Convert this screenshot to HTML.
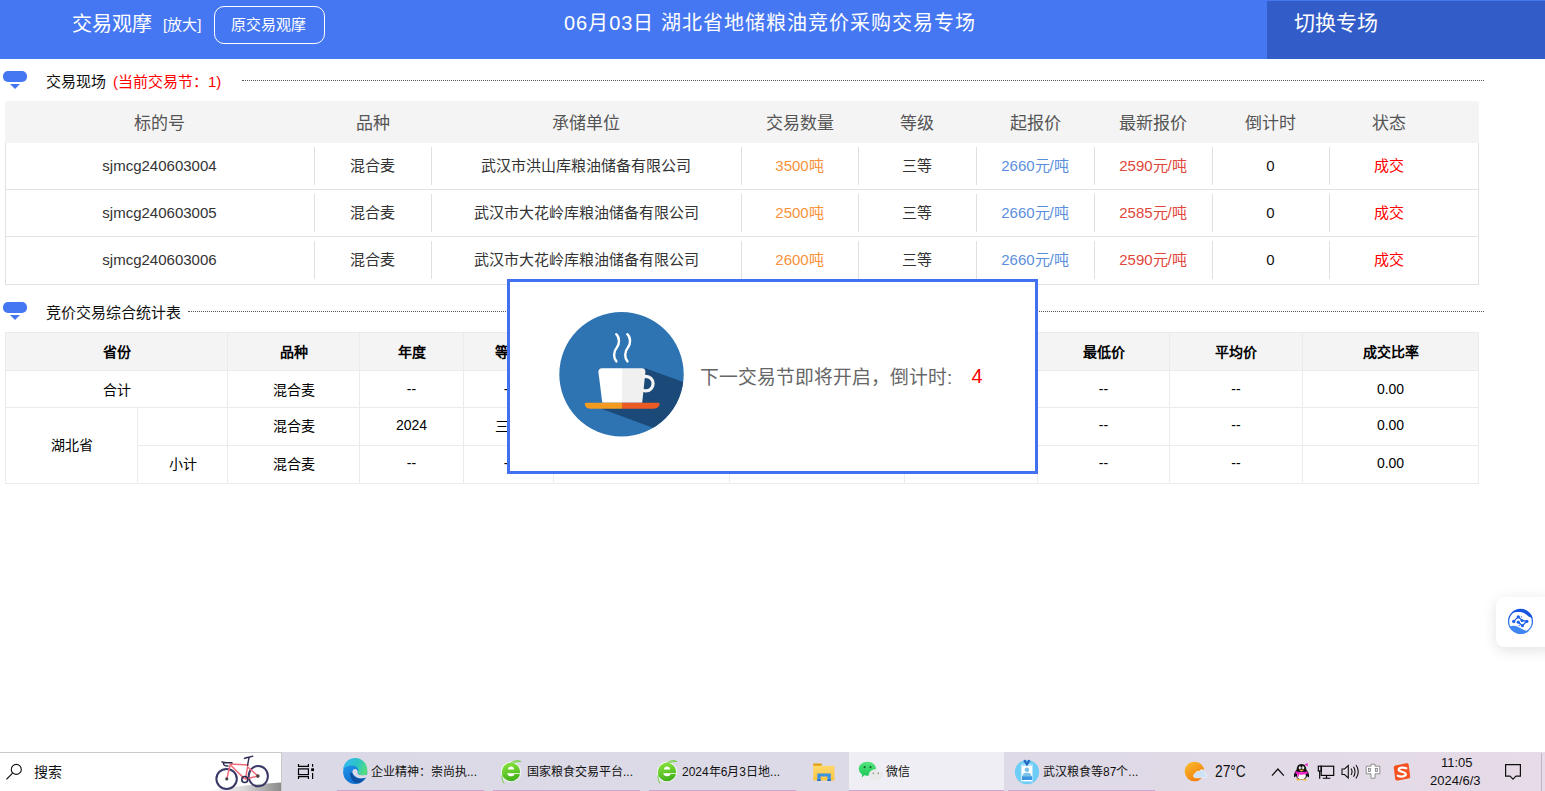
<!DOCTYPE html>
<html lang="zh-CN"><head><meta charset="utf-8">
<style>
*{margin:0;padding:0;box-sizing:border-box}
html,body{width:1545px;height:791px;overflow:hidden;background:#fff;font-family:"Liberation Sans",sans-serif;position:relative}
.a{position:absolute;white-space:nowrap}
#hdr{left:0;top:0;width:1545px;height:59px;background:#4677f2}
#sw{left:1267px;top:1px;width:278px;height:58px;background:#325cc8}
.w{color:#fff}
.icon{position:absolute;left:3px;width:24px;height:18px}
.icon:before{content:"";position:absolute;left:0;top:0;width:24px;height:11px;border-radius:5px;background:#4677f2}
.icon:after{content:"";position:absolute;left:6.5px;top:13px;border-left:5.7px solid transparent;border-right:5.7px solid transparent;border-top:5px solid #4677f2}
.dots{position:absolute;height:0;border-top:1px dotted #555}
.t1{position:absolute;left:5px;top:101px;width:1474px}
.t1h{position:absolute;left:0;top:0;width:1474px;height:42px;background:#f4f4f4;border-radius:3px 3px 0 0}
.t1b{position:absolute;left:0;top:42px;width:1474px;height:142px;border:1px solid #e2e2e2;border-top:none}
.rowline{position:absolute;left:0;width:1472px;height:1px;background:#e2e2e2}
.sep{position:absolute;width:1px;height:38px;background:#e0e0e0}
.c{position:absolute;text-align:center;white-space:nowrap}
.hc{font-size:17px;color:#555}
.bc{font-size:15px;color:#000}
.t2{position:absolute;left:5px;top:332px;width:1474px;height:152px}
.t2 table{border-collapse:collapse;table-layout:fixed;width:1474px;position:absolute;left:0;top:0}
.t2 td,.t2 th{border:1px solid #ebebeb;text-align:center;font-size:14px;color:#000;padding:0}
.t2 th{background:#f4f4f4;font-weight:bold;color:#000;height:38px;padding-bottom:2px}
.t2 td{height:37px}
.t2 tr.r2 td{padding-bottom:3px}
#modal{left:507px;top:279px;width:531px;height:195px;border:3px solid #4170f0;background:#fff}
</style></head><body>
<div class="a" id="hdr"></div>
<div class="a" id="sw"></div>
<div class="a w" style="left:72px;top:10px;font-size:20px;line-height:28px">交易观摩</div>
<div class="a w" style="left:163px;top:15px;font-size:15px;line-height:20px">[放大]</div>
<div class="a" style="left:214px;top:6px;width:111px;height:38px;border:1px solid #fff;border-radius:10px"></div>
<div class="a w" style="left:231px;top:14px;font-size:15px;line-height:22px">原交易观摩</div>
<div class="a w" style="left:564px;top:9px;font-size:20px;line-height:28px;letter-spacing:1px">06月03日 湖北省地储粮油竞价采购交易专场</div>
<div class="a w" style="left:1294px;top:9px;font-size:21px;line-height:28px">切换专场</div>

<!-- section 1 -->
<div class="icon" style="top:71px"></div>
<div class="a" style="left:46px;top:71px;font-size:15px;line-height:21px;color:#111">交易现场</div>
<div class="a" style="left:113px;top:71px;font-size:15px;line-height:21px;color:#f00">(当前交易节：1)</div>
<div class="dots" style="left:242px;top:80px;width:1242px"></div>

<div class="t1">
 <div class="t1h"></div>
 <div class="t1b"></div>
</div>
<div id="t1c">
<div class="c hc" style="left:5px;top:112px;width:309px;line-height:24px">标的号</div>
<div class="c hc" style="left:314px;top:112px;width:117px;line-height:24px">品种</div>
<div class="c hc" style="left:431px;top:112px;width:310px;line-height:24px">承储单位</div>
<div class="c hc" style="left:741px;top:112px;width:117px;line-height:24px">交易数量</div>
<div class="c hc" style="left:858px;top:112px;width:118px;line-height:24px">等级</div>
<div class="c hc" style="left:976px;top:112px;width:118px;line-height:24px">起报价</div>
<div class="c hc" style="left:1094px;top:112px;width:118px;line-height:24px">最新报价</div>
<div class="c hc" style="left:1212px;top:112px;width:117px;line-height:24px">倒计时</div>
<div class="c hc" style="left:1329px;top:112px;width:120px;line-height:24px">状态</div>
<div class="c bc" style="left:5px;top:155px;width:309px;line-height:22px;color:#333">sjmcg240603004</div>
<div class="c bc" style="left:314px;top:155px;width:117px;line-height:22px;color:#333">混合麦</div>
<div class="sep" style="left:314px;top:147px"></div>
<div class="c bc" style="left:431px;top:155px;width:310px;line-height:22px;color:#333">武汉市洪山库粮油储备有限公司</div>
<div class="sep" style="left:431px;top:147px"></div>
<div class="c bc" style="left:741px;top:155px;width:117px;line-height:22px;color:#f7923b">3500吨</div>
<div class="sep" style="left:741px;top:147px"></div>
<div class="c bc" style="left:858px;top:155px;width:118px;line-height:22px;color:#333">三等</div>
<div class="sep" style="left:858px;top:147px"></div>
<div class="c bc" style="left:976px;top:155px;width:118px;line-height:22px;color:#5b8fde">2660元/吨</div>
<div class="sep" style="left:976px;top:147px"></div>
<div class="c bc" style="left:1094px;top:155px;width:118px;line-height:22px;color:#e0463c">2590元/吨</div>
<div class="sep" style="left:1094px;top:147px"></div>
<div class="c bc" style="left:1212px;top:155px;width:117px;line-height:22px;color:#111">0</div>
<div class="sep" style="left:1212px;top:147px"></div>
<div class="c bc" style="left:1329px;top:155px;width:120px;line-height:22px;color:#f00">成交</div>
<div class="sep" style="left:1329px;top:147px"></div>
<div class="rowline" style="left:6px;top:189px"></div>
<div class="c bc" style="left:5px;top:202px;width:309px;line-height:22px;color:#333">sjmcg240603005</div>
<div class="c bc" style="left:314px;top:202px;width:117px;line-height:22px;color:#333">混合麦</div>
<div class="sep" style="left:314px;top:194px"></div>
<div class="c bc" style="left:431px;top:202px;width:310px;line-height:22px;color:#333">武汉市大花岭库粮油储备有限公司</div>
<div class="sep" style="left:431px;top:194px"></div>
<div class="c bc" style="left:741px;top:202px;width:117px;line-height:22px;color:#f7923b">2500吨</div>
<div class="sep" style="left:741px;top:194px"></div>
<div class="c bc" style="left:858px;top:202px;width:118px;line-height:22px;color:#333">三等</div>
<div class="sep" style="left:858px;top:194px"></div>
<div class="c bc" style="left:976px;top:202px;width:118px;line-height:22px;color:#5b8fde">2660元/吨</div>
<div class="sep" style="left:976px;top:194px"></div>
<div class="c bc" style="left:1094px;top:202px;width:118px;line-height:22px;color:#e0463c">2585元/吨</div>
<div class="sep" style="left:1094px;top:194px"></div>
<div class="c bc" style="left:1212px;top:202px;width:117px;line-height:22px;color:#111">0</div>
<div class="sep" style="left:1212px;top:194px"></div>
<div class="c bc" style="left:1329px;top:202px;width:120px;line-height:22px;color:#f00">成交</div>
<div class="sep" style="left:1329px;top:194px"></div>
<div class="rowline" style="left:6px;top:236px"></div>
<div class="c bc" style="left:5px;top:249px;width:309px;line-height:22px;color:#333">sjmcg240603006</div>
<div class="c bc" style="left:314px;top:249px;width:117px;line-height:22px;color:#333">混合麦</div>
<div class="sep" style="left:314px;top:241px"></div>
<div class="c bc" style="left:431px;top:249px;width:310px;line-height:22px;color:#333">武汉市大花岭库粮油储备有限公司</div>
<div class="sep" style="left:431px;top:241px"></div>
<div class="c bc" style="left:741px;top:249px;width:117px;line-height:22px;color:#f7923b">2600吨</div>
<div class="sep" style="left:741px;top:241px"></div>
<div class="c bc" style="left:858px;top:249px;width:118px;line-height:22px;color:#333">三等</div>
<div class="sep" style="left:858px;top:241px"></div>
<div class="c bc" style="left:976px;top:249px;width:118px;line-height:22px;color:#5b8fde">2660元/吨</div>
<div class="sep" style="left:976px;top:241px"></div>
<div class="c bc" style="left:1094px;top:249px;width:118px;line-height:22px;color:#e0463c">2590元/吨</div>
<div class="sep" style="left:1094px;top:241px"></div>
<div class="c bc" style="left:1212px;top:249px;width:117px;line-height:22px;color:#111">0</div>
<div class="sep" style="left:1212px;top:241px"></div>
<div class="c bc" style="left:1329px;top:249px;width:120px;line-height:22px;color:#f00">成交</div>
<div class="sep" style="left:1329px;top:241px"></div>
</div>

<!-- section 2 -->
<div class="icon" style="top:302px"></div>
<div class="a" style="left:46px;top:302px;font-size:15px;line-height:21px;color:#111">竞价交易综合统计表</div>
<div class="dots" style="left:188px;top:311px;width:1296px"></div>

<div class="t2">
<table>
<colgroup><col style="width:132px"><col style="width:90px"><col style="width:132px"><col style="width:104px"><col style="width:90px"><col style="width:176px"><col style="width:175px"><col style="width:133px"><col style="width:132px"><col style="width:133px"><col style="width:176px"></colgroup>
<tr><th colspan="2">省份</th><th>品种</th><th>年度</th><th>等级</th><th>挂牌数量</th><th>成交数量</th><th>最高价</th><th>最低价</th><th>平均价</th><th>成交比率</th></tr>
<tr><td colspan="2">合计</td><td>混合麦</td><td>--</td><td>--</td><td>3</td><td>3</td><td>--</td><td>--</td><td>--</td><td>0.00</td></tr>
<tr class="r2" style="height:38px"><td rowspan="2">湖北省</td><td></td><td>混合麦</td><td>2024</td><td>三等</td><td>3</td><td>3</td><td>--</td><td>--</td><td>--</td><td>0.00</td></tr>
<tr class="r2" style="height:38px"><td>小计</td><td>混合麦</td><td>--</td><td>--</td><td>3</td><td>3</td><td>--</td><td>--</td><td>--</td><td>0.00</td></tr>
</table>
</div>

<div class="a" id="modal"></div>
<svg class="a" style="left:555px;top:308px" width="135" height="135" viewBox="555 308 135 135">
<defs><clipPath id="cc"><circle cx="621.5" cy="374.3" r="62.2"/></clipPath>
<linearGradient id="cupg" x1="598.4" x2="645.4" gradientUnits="userSpaceOnUse"><stop offset="0.502" stop-color="#fff"/><stop offset="0.502" stop-color="#f0f0f0"/></linearGradient>
<linearGradient id="sauc" x1="585" x2="659.3" gradientUnits="userSpaceOnUse"><stop offset="0.498" stop-color="#f39a21"/><stop offset="0.498" stop-color="#ed5b25"/></linearGradient></defs>
<circle cx="621.5" cy="374.3" r="62.2" fill="#2e74b2"/>
<polygon clip-path="url(#cc)" points="645.4,368.3 720,395.2 720,452.5 601.4,408.8 602,402" fill="#1b4a78"/>
<circle cx="645.8" cy="383.6" r="7.3" fill="none" stroke="#f4f4f4" stroke-width="3.2"/>
<path d="M598.4,372 Q598.4,368.3 602,368.3 L641.8,368.3 Q645.4,368.3 645.4,372 L642.2,402.8 L602.3,402.8 Z" fill="url(#cupg)"/>
<path d="M586.5,402.8 L658,402.8 C660,402.8 660,404.5 659,405.8 C658,407.6 656.5,408.7 653,408.7 L591,408.7 C587.5,408.7 586,407.6 585.2,405.8 C584.3,404.5 584.5,402.8 586.5,402.8 Z" fill="url(#sauc)"/>
<path d="M616.2,334.2 C619.8,337.5 619.8,344 616.7,347.8 C613.3,351.5 613.3,358 616.4,361.4" fill="none" stroke="#fff" stroke-width="2.4" stroke-linecap="round"/>
<path d="M627.3,334.2 C630.9,337.5 630.9,344 627.8,347.8 C624.4,351.5 624.4,358 627.5,361.4" fill="none" stroke="#fff" stroke-width="2.4" stroke-linecap="round"/>
</svg>
<div class="a" style="left:700px;top:363.5px;font-size:18.8px;line-height:28px;color:#666">下一交易节即将开启，倒计时:</div>
<div class="a" style="left:971.5px;top:362px;font-size:20px;line-height:28px;color:#f00">4</div>

<!-- taskbar -->
<div class="a" style="left:0;top:752px;width:1545px;height:39px;background:linear-gradient(to right,#dad9e5 0%,#dcdae6 55%,#e0dae7 75%,#e6dbe7 100%)"></div>
<div class="a" style="left:0;top:752px;width:282px;height:39px;background:#fff;border-top:1px solid #c9c9c9;border-right:1px solid #c9c9c9"></div>
<svg class="a" style="left:0;top:752px" width="40" height="39" viewBox="0 752 40 39"><circle cx="16.3" cy="769.4" r="5" fill="none" stroke="#111" stroke-width="1.1"/><line x1="12.6" y1="773.2" x2="6.4" y2="779.4" stroke="#111" stroke-width="1.2"/></svg>
<div class="a" style="left:34px;top:762px;font-size:14px;line-height:20px;color:#111">搜索</div>
<!-- bike -->
<svg class="a" style="left:200px;top:753px" width="81" height="38" viewBox="200 753 81 38">
<defs><linearGradient id="gnd" x1="207" y1="0" x2="281" y2="0" gradientUnits="userSpaceOnUse"><stop offset="0" stop-color="#fff"/><stop offset="0.5" stop-color="#d8d8d8"/><stop offset="1" stop-color="#8a8a8a"/></linearGradient></defs>
<path d="M207,791 C230,787 255,784 281,782.4 L281,791 Z" fill="url(#gnd)"/>
<ellipse cx="226.6" cy="778.9" rx="10.2" ry="10" fill="none" stroke="#3a3868" stroke-width="2"/>
<ellipse cx="258.3" cy="776.1" rx="9.6" ry="10.2" fill="none" stroke="#3a3868" stroke-width="2"/>
<path d="M230.4,764 L226.8,778.9 M231,765.5 L244.6,778.9 M230.4,763.9 L247.8,765 L245.6,778.9 L258,776.1 L248.3,767.5" fill="none" stroke="#f06a7a" stroke-width="1.5" stroke-linejoin="round"/>
<path d="M247.6,765 L249,757.7 M244.4,758.4 C247,757 250,757.5 252.8,756.2 M222,761.8 C224,763 227,762.5 232,762.8 M223.5,762.5 C223,765 225,766.3 228,766" fill="none" stroke="#2c2a50" stroke-width="1.4" stroke-linecap="round"/>
<circle cx="244.8" cy="779.5" r="3" fill="none" stroke="#2c2a50" stroke-width="1.6"/>
<circle cx="226.8" cy="778.9" r="1.6" fill="#444"/><circle cx="257.9" cy="776.1" r="1.8" fill="#444"/>
</svg>
<!-- task view -->
<svg class="a" style="left:290px;top:752px" width="30" height="39" viewBox="290 752 30 39" fill="none" stroke="#000" stroke-width="1.2">
<path d="M298.5,764 L298.5,766.3 L308.4,766.3 L308.4,764 M298.5,779 L298.5,776.6 L308.4,776.6 L308.4,779 M312.6,764 L312.6,766.8 M312.6,773 L312.6,779"/>
<rect x="298.5" y="768.9" width="9.9" height="5.7"/><rect x="311.2" y="768.3" width="2.8" height="2.8" fill="#000" stroke="none"/>
</svg>
<!-- underlines -->
<div class="a" style="left:337px;top:790px;width:147px;height:1px;background:#cfa6cf"></div>
<div class="a" style="left:493px;top:790px;width:147px;height:1px;background:#cfa6cf"></div>
<div class="a" style="left:649px;top:790px;width:147px;height:1px;background:#cfa6cf"></div>
<div class="a" style="left:849px;top:752px;width:155px;height:39px;background:#efeef4"></div>
<div class="a" style="left:849px;top:790px;width:155px;height:1px;background:#cfa6cf"></div>
<div class="a" style="left:1008px;top:790px;width:147px;height:1px;background:#cfa6cf"></div>
<!-- edge -->
<svg class="a" style="left:340px;top:757px" width="30" height="30" viewBox="340 757 30 30">
<defs><linearGradient id="eg1" x1="343" y1="762" x2="367" y2="774" gradientUnits="userSpaceOnUse"><stop offset="0" stop-color="#38b8f2"/><stop offset="0.5" stop-color="#2cc4c6"/><stop offset="1" stop-color="#5de36e"/></linearGradient>
<linearGradient id="eg2" x1="345" y1="766" x2="352" y2="784" gradientUnits="userSpaceOnUse"><stop offset="0" stop-color="#1d92e6"/><stop offset="1" stop-color="#0f6fd0"/></linearGradient></defs>
<circle cx="355.2" cy="771.9" r="12.1" fill="url(#eg2)"/>
<path d="M343.1,769.2 C346.5,765.2 352.5,764.5 356,766.6 C358.5,768 358.6,771 357.6,773 C359,775 362.5,775.8 366.2,775 A12.1,12.1 0 1 0 343.1,769.2 Z" fill="url(#eg1)"/>
<ellipse cx="355" cy="771.9" rx="2.5" ry="2.8" fill="#dbdae6"/>
<path d="M352.5,772.5 C353.5,776 357,777.8 360,778.2 C362.5,778.4 365,778 368,777 L368,774.3 C365,775.5 361,775.6 358.6,774.6 C357.6,774.1 357.4,772.5 357.4,771 Z" fill="#dbdae6"/>
<path d="M350.2,772.2 C350,776 351,780 355.2,782.8 C358.5,783.6 362.5,781.6 365.2,778 C362.5,779.2 360.5,779.2 358.6,778.8 C355.5,778 353.2,776 352.5,773.2 Z" fill="#0e4fa2"/>
</svg>
<div class="a" style="left:371px;top:762px;font-size:12px;line-height:20px;color:#111">企业精神：崇尚执...</div>
<!-- ie1 -->
<svg class="a" style="left:496px;top:757px" width="30" height="30" viewBox="496 757 30 30">
<defs><linearGradient id="ieg" x1="0" y1="0" x2="0.3" y2="1"><stop offset="0" stop-color="#8ee83a"/><stop offset="1" stop-color="#46b21e"/></linearGradient></defs>
<circle cx="511" cy="772" r="10.2" fill="#f4f4f6"/><circle cx="511" cy="772" r="9.2" fill="url(#ieg)"/>
<path d="M508,769.6 C508,767.5 509.3,766.4 511,766.4 C512.7,766.4 514.1,767.5 514.1,769.6 Z" fill="#fff"/>
<path d="M507.2,773.3 L520.2,773.3 L520.2,774 L514.6,774 C514.2,775.6 512.8,776.2 511,776.2 C509,776.2 507.4,775.3 507.2,773.3 Z" fill="#fff"/>
<path d="M504.2,783.6 C501.5,780 501.8,776 503,773.5 C504.5,769.5 507.5,765 511.5,762.5 C514.5,760.5 518,760 520.8,761.5 C518,761.2 515,762 512.5,763.5" fill="none" stroke="#6fd33a" stroke-width="1"/>
</svg>
<div class="a" style="left:527px;top:762px;font-size:12px;line-height:20px;color:#111">国家粮食交易平台...</div>
<!-- ie2 -->
<svg class="a" style="left:652px;top:757px" width="30" height="30" viewBox="496 757 30 30">
<defs><linearGradient id="ieg2" x1="0" y1="0" x2="0.3" y2="1"><stop offset="0" stop-color="#8ee83a"/><stop offset="1" stop-color="#46b21e"/></linearGradient></defs>
<circle cx="511" cy="772" r="10.2" fill="#f4f4f6"/><circle cx="511" cy="772" r="9.2" fill="url(#ieg2)"/>
<path d="M508,769.6 C508,767.5 509.3,766.4 511,766.4 C512.7,766.4 514.1,767.5 514.1,769.6 Z" fill="#fff"/>
<path d="M507.2,773.3 L520.2,773.3 L520.2,774 L514.6,774 C514.2,775.6 512.8,776.2 511,776.2 C509,776.2 507.4,775.3 507.2,773.3 Z" fill="#fff"/>
<path d="M504.2,783.6 C501.5,780 501.8,776 503,773.5 C504.5,769.5 507.5,765 511.5,762.5 C514.5,760.5 518,760 520.8,761.5 C518,761.2 515,762 512.5,763.5" fill="none" stroke="#6fd33a" stroke-width="1"/>
</svg>
<div class="a" style="left:682px;top:762px;font-size:12px;line-height:20px;color:#111">2024年6月3日地...</div>
<!-- explorer -->
<svg class="a" style="left:810px;top:760px" width="28" height="24" viewBox="810 760 28 24">
<defs><linearGradient id="exg" x1="0" y1="0" x2="0" y2="1"><stop offset="0" stop-color="#ffd86e"/><stop offset="1" stop-color="#fbc440"/></linearGradient></defs>
<path d="M813.2,763.5 L821,763.5 L822.2,764.6 L821,766 L813.2,766 Z" fill="#e3a20c"/>
<rect x="813.2" y="765.7" width="21.3" height="14.8" rx="0.6" fill="url(#exg)"/>
<path d="M817.3,781 L817.3,773.5 L830.8,773.5 L830.8,781 L827.5,781 L827.5,776.5 L820.6,776.5 L820.6,781 Z" fill="#3d93df"/>
<rect x="817.3" y="779.5" width="3.3" height="1.5" fill="#1f6fc0"/><rect x="827.5" y="779.5" width="3.3" height="1.5" fill="#1f6fc0"/>
</svg>
<!-- wechat -->
<svg class="a" style="left:855px;top:759px" width="30" height="25" viewBox="855 759 30 25">
<defs><linearGradient id="wcg" x1="0" y1="0" x2="0" y2="1"><stop offset="0" stop-color="#55e67e"/><stop offset="1" stop-color="#17c653"/></linearGradient></defs>
<path d="M867.4,761.8 C872.5,761.8 876,765 876,768.8 C876,772.6 872.5,775.8 867.4,775.8 C866.2,775.8 865.2,775.6 864.2,775.3 L861.8,777.5 L862.2,774.5 C860,773.1 858.8,771 858.8,768.8 C858.8,765 862.3,761.8 867.4,761.8 Z" fill="url(#wcg)"/>
<circle cx="864.6" cy="767.2" r="1.1" fill="#1b6a33"/><circle cx="870.5" cy="767.2" r="1.1" fill="#1b6a33"/>
<path d="M876,769.6 C880,769.6 883,772 883,775 C883,777 881.7,778.6 880,779.5 L880.5,781.8 L878.3,780.4 C877.6,780.6 876.8,780.7 876,780.7 C872,780.7 869.2,778.2 869.2,775.1 C869.2,772 872,769.6 876,769.6 Z" fill="#e9e9ea" stroke="#efeef4" stroke-width="0.8"/>
<rect x="872.7" y="772.5" width="1.4" height="1.6" fill="#9a9a9a"/><rect x="877.6" y="772.5" width="1.4" height="1.6" fill="#9a9a9a"/>
</svg>
<div class="a" style="left:886px;top:762px;font-size:12px;line-height:20px;color:#111">微信</div>
<!-- wuhan -->
<svg class="a" style="left:1013px;top:758px" width="28" height="28" viewBox="1013 758 28 28">
<circle cx="1027" cy="772.1" r="12.1" fill="#6dcdf6"/>
<rect x="1020.8" y="763.8" width="12.2" height="18.2" fill="#a9e0fa"/>
<rect x="1021.7" y="766" width="10.4" height="15" fill="#fff"/>
<circle cx="1026.9" cy="769.8" r="2.3" fill="#7cc3ea"/>
<path d="M1022.5,776.3 C1022.5,773.5 1024.5,772.8 1026.9,772.8 C1029.3,772.8 1031.3,773.5 1031.3,776.3 Z" fill="#7cc3ea"/>
<rect x="1022" y="776.2" width="10.1" height="3.8" fill="#3a97e0"/>
<path d="M1024.3,760.2 L1026.9,764.3 L1029.5,760.2" fill="none" stroke="#2566c0" stroke-width="2.2"/>
</svg>
<div class="a" style="left:1043px;top:762px;font-size:12px;line-height:20px;color:#111">武汉粮食等87个...</div>
<!-- weather -->
<svg class="a" style="left:1182px;top:759px" width="28" height="25" viewBox="1182 759 28 25">
<defs><linearGradient id="sun" x1="0" y1="0" x2="0.7" y2="1"><stop offset="0" stop-color="#fbc02d"/><stop offset="1" stop-color="#f07a0c"/></linearGradient></defs>
<circle cx="1194.5" cy="771.5" r="9.8" fill="url(#sun)"/>
<path d="M1195.5,777.8 C1193,777.8 1192.8,774.2 1195.2,773.8 C1195.6,771.8 1197.6,770.8 1199.3,771.5 C1200.2,769.5 1203.6,769 1204.8,771.8 C1205.5,773 1205.2,774 1205,774.2 C1207.5,774.6 1207.5,777.8 1205,777.8 Z" fill="#cde2f7" stroke="#f5f8fc" stroke-width="0.7"/>
</svg>
<div class="a" style="left:1215px;top:760px;font-size:15px;line-height:22px;color:#111;transform:scale(0.92,1.08);transform-origin:0 0">27°C</div>
<svg class="a" style="left:1268px;top:764px" width="20" height="14" viewBox="1268 764 20 14"><path d="M1272,775.6 L1277.9,769 L1283.8,775.6" fill="none" stroke="#111" stroke-width="1.3"/></svg>
<!-- qq -->
<svg class="a" style="left:1292px;top:762px" width="20" height="20" viewBox="1292 762 20 20">
<path d="M1301.5,764 C1305,764 1306.3,767 1306.3,769.5 C1308,771 1309.5,774 1309,777 C1308.5,778 1307.5,776.5 1307,776 C1306.5,778.5 1304.5,779.5 1301.5,779.5 C1298.5,779.5 1296.5,778.5 1296,776 C1295.5,776.5 1294.5,778 1294,777 C1293.5,774 1295,771 1296.7,769.5 C1296.7,767 1298,764 1301.5,764 Z" fill="#111"/>
<ellipse cx="1301.5" cy="775.5" rx="4.3" ry="3.8" fill="#fff"/>
<ellipse cx="1300" cy="767.8" rx="1.3" ry="1.5" fill="#fff"/><ellipse cx="1303" cy="767.8" rx="1.3" ry="1.5" fill="#fff"/>
<circle cx="1300.2" cy="768" r="0.5" fill="#111"/><circle cx="1302.8" cy="768" r="0.5" fill="#111"/>
<path d="M1298.5,769.8 L1304.5,769.8 L1301.5,771.3 Z" fill="#f6b829"/>
<path d="M1295.5,771 C1299,772.6 1304,772.6 1307.5,771 L1307.8,773.5 C1304,775 1299,775 1295.3,773.5 Z" fill="#f01fc8"/>
<path d="M1297.5,773.5 L1297.2,777 L1298.8,776.5 L1299,774 Z" fill="#f01fc8"/>
<path d="M1304.5,764.5 L1307.5,763 L1307.8,766.5 Z" fill="#f01fc8"/>
<ellipse cx="1298.3" cy="779.7" rx="2.4" ry="0.7" fill="#f6b829"/><ellipse cx="1304.7" cy="779.7" rx="2.4" ry="0.7" fill="#f6b829"/>
</svg>
<!-- network -->
<svg class="a" style="left:1315px;top:763px" width="22" height="18" viewBox="1315 763 22 18" fill="none" stroke="#000" stroke-width="1.15">
<rect x="1321.2" y="766.2" width="12.5" height="9.2"/><path d="M1322.8,778.2 L1330.3,778.2 M1326.5,775.4 L1326.5,778.2 M1319.7,771 L1319.7,778.8"/><rect x="1318.3" y="766.2" width="2.9" height="4.8"/>
</svg>
<!-- volume -->
<svg class="a" style="left:1339px;top:763px" width="22" height="18" viewBox="1339 763 22 18" fill="none" stroke="#111" stroke-width="1.1">
<path d="M1342,769 L1344.5,769 L1348.3,765.5 L1348.3,778 L1344.5,774.5 L1342,774.5 Z"/><path d="M1351,768.5 C1352.3,770.5 1352.3,773 1351,775 M1353.5,766.7 C1355.5,769.5 1355.5,774 1353.5,776.8 M1356,765 C1359,769 1359,774.5 1356,778.4"/>
</svg>
<svg class="a" style="left:1363px;top:762px" width="20" height="18" viewBox="1363 762 20 18">
<path d="M1371,764.2 L1375,764.2 L1375,766.2 L1379.8,766.2 L1379.8,773.8 L1375,773.8 L1375,778.2 L1371,778.2 L1371,773.8 L1366.2,773.8 L1366.2,766.2 L1371,766.2 Z" fill="#fff" stroke="#707070" stroke-width="0.75"/>
<rect x="1368.6" y="768.3" width="1.8" height="3.3" fill="#e0dae6" stroke="#707070" stroke-width="0.7"/><rect x="1375.6" y="768.3" width="1.8" height="3.3" fill="#e0dae6" stroke="#707070" stroke-width="0.7"/>
</svg>
<!-- sogou -->
<svg class="a" style="left:1392px;top:762px" width="20" height="20" viewBox="1392 762 20 20">
<path d="M1396.5,764.6 L1407.5,764 C1408.8,764 1409.5,764.6 1409.6,765.8 L1409.5,777 C1409.5,778.5 1408.8,779.3 1407.5,779.4 L1396.5,779.8 C1395.2,779.8 1394.4,779 1394.3,777.7 L1394.5,766.6 C1394.5,765.4 1395.3,764.7 1396.5,764.6 Z" fill="#f4511e" transform="rotate(-8 1402 772)"/>
<path d="M1406.3,768.3 C1403.5,767 1398.8,767.5 1398.7,769.8 C1398.6,772 1405.8,771.5 1405.8,774.3 C1405.8,776.5 1401,777.2 1397.8,775.8" fill="none" stroke="#fff" stroke-width="2.3" stroke-linecap="round"/>
</svg>
<div class="a" style="left:1441px;top:755px;font-size:13px;line-height:15px;color:#111">11:05</div>
<div class="a" style="left:1430px;top:773px;font-size:13px;line-height:15px;color:#111">2024/6/3</div>
<svg class="a" style="left:1503px;top:762px" width="22" height="20" viewBox="1503 762 22 20" fill="none" stroke="#111" stroke-width="1.2">
<path d="M1505.6,764.6 L1520.4,764.6 L1520.4,776.2 L1516,776.2 L1513,779.2 L1510,776.2 L1505.6,776.2 Z"/>
</svg>
<div class="a" style="left:1541px;top:753px;width:1px;height:38px;background:#b9b6c6"></div>
<!-- floating -->
<div class="a" style="left:1496px;top:597px;width:60px;height:50px;background:#fff;border-radius:8px;box-shadow:0 3px 14px rgba(0,0,0,0.12)"></div>
<svg class="a" style="left:1505px;top:606px" width="32" height="32" viewBox="1505 606 32 32">
<defs><linearGradient id="fg" x1="0" y1="0" x2="0" y2="1"><stop offset="0" stop-color="#1656e0"/><stop offset="1" stop-color="#4b8ff6"/></linearGradient></defs>
<circle cx="1520.5" cy="621.4" r="11.9" fill="none" stroke="url(#fg)" stroke-width="1.3"/>
<path d="M1511.5,613.5 A12.4,12.4 0 0 1 1532.4,617.5 C1530,618 1528,616 1525.5,614 C1522,611.5 1516,611.5 1511.5,613.5 Z" fill="#1656e0"/>
<path d="M1509.5,626.4 A12.4,12.4 0 0 0 1529.2,630.8 C1526.5,631 1524.5,630.3 1522,629 C1519,627.5 1515.5,624.3 1509.5,626.4 Z" fill="#3f86f3"/>
<path d="M1513.7,621.4 L1518.3,616.9 L1522,620.4 L1526.8,621.4 L1522.4,625.8 L1518.3,622.2" fill="none" stroke="#1e62e6" stroke-width="1.3"/>
<g fill="#1e62e6"><circle cx="1513.7" cy="621.4" r="1.7"/><circle cx="1518.3" cy="616.9" r="1.7"/><circle cx="1522" cy="620.4" r="1.5"/><circle cx="1526.8" cy="621.4" r="1.7"/><circle cx="1518.3" cy="622.2" r="1.6"/><circle cx="1522.4" cy="625.8" r="1.5"/><circle cx="1521.4" cy="616.9" r="0.6"/><circle cx="1519.2" cy="625.4" r="0.6"/></g>
</svg>
</body>
</html>
